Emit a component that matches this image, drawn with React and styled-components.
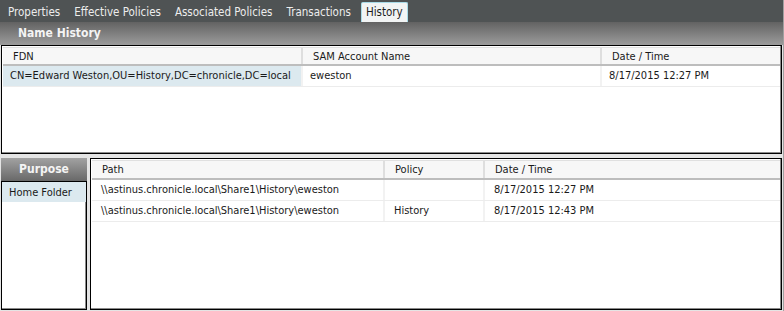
import styled, { createGlobalStyle } from "styled-components";

const tabs = [`Properties`, `Effective Policies`, `Associated Policies`, `Transactions`, `History`];

const nameCols = [
  { title: `FDN`, width: 300 },
  { title: `SAM Account Name`, width: 299 },
  { title: `Date / Time`, width: 179 },
];
const nameRows = [
  [`CN=Edward Weston,OU=History,DC=chronicle,DC=local`, `eweston`, `8/17/2015 12:27 PM`],
];

const pathCols = [
  { title: `Path`, width: 293 },
  { title: `Policy`, width: 100 },
  { title: `Date / Time`, width: 295 },
];
const pathRows = [
  [`\\\\astinus.chronicle.local\\Share1\\History\\eweston`, ``, `8/17/2015 12:27 PM`],
  [`\\\\astinus.chronicle.local\\Share1\\History\\eweston`, `History`, `8/17/2015 12:43 PM`],
];

const GlobalStyle = createGlobalStyle`
  body {
    margin: 0;
    background: #c4c4c4;
    font-family: "DejaVu Sans Condensed", "DejaVu Sans", sans-serif;
    font-size: 11px;
    color: #1a1a1a;
  }
`;

const Page = styled.div`
  width: 784px;
  height: 311px;
  display: flex;
  flex-direction: column;
  background: #e4e4e4;
  border-right: 1px solid #a0a0a0;
  box-sizing: border-box;
`;

const TabBar = styled.div`
  height: 22px;
  background: #4f5354;
  display: flex;
  align-items: flex-end;
  padding-left: 1px;
`;

const Tab = styled.div`
  height: 20px;
  padding: 0 ${(p) => (p.active ? 4 : 6)}px;
  box-sizing: border-box;
  font-size: 11.5px;
  line-height: 19px;
  color: ${(p) => (p.active ? `#1e1e1e` : `#ededed`)};
  background: ${(p) => (p.active ? `#f2f4f4` : `transparent`)};
  border: 1px solid ${(p) => (p.active ? `#a9dbe8` : `transparent`)};
  border-bottom: none;
  border-radius: 2px 2px 0 0;
  margin-left: ${(p) => (p.active ? 3 : 0)}px;
`;

const SectionHeader = styled.div`
  height: 23px;
  line-height: 22px;
  padding-left: 18px;
  background: linear-gradient(#626262, #9c9c9c);
  color: #f4f4f4;
  font-weight: bold;
  font-size: 12px;
  box-sizing: border-box;
`;

const ListBox = styled.div`
  height: ${(p) => (p.h ? `${p.h}px` : `auto`)};
  margin: ${(p) => p.m};
  border: 1px solid #000;
  background: #fff;
  padding: ${(p) => p.pad};
  box-sizing: border-box;
  box-shadow: inset -1px -1px 0 #8a8a8a;
  flex: ${(p) => (p.grow ? 1 : `none`)};
`;

const HeaderRow = styled.div`
  display: flex;
  height: ${(p) => p.h}px;
  background: #f7f7f7;
  border-top: 1px solid #e0e0e0;
  border-bottom: 2px solid #bdbdbd;
  box-sizing: border-box;
`;

const HeaderCell = styled.div`
  width: ${(p) => p.w}px;
  padding-left: 10px;
  line-height: ${(p) => p.lh}px;
  box-sizing: border-box;
  border-right: 2px solid #dedede;
  &:last-child {
    flex: 1;
    border-right: none;
  }
`;

const Row = styled.div`
  display: flex;
  height: 21px;
  border-bottom: 1px solid #ececec;
  box-sizing: border-box;
`;

const Cell = styled.div`
  width: ${(p) => p.w}px;
  padding-left: ${(p) => p.inset}px;
  line-height: 20px;
  box-sizing: border-box;
  white-space: nowrap;
  background: ${(p) => (p.selected ? `#dce9ef` : `transparent`)};
  border-right: 2px solid #f2f2f2;
  &:last-child {
    flex: 1;
    border-right: none;
  }
`;

const Bottom = styled.div`
  display: flex;
  gap: 3px;
  padding: 4px 1px 1px;
  flex: 1;
  min-height: 0;
`;

const Side = styled.div`
  width: 86px;
  display: flex;
  flex-direction: column;
`;

const SideHeader = styled.div`
  height: 23px;
  line-height: 22px;
  text-align: center;
  color: #f4f4f4;
  font-weight: bold;
  font-size: 12px;
  background: linear-gradient(#a2a2a2, #686868);
`;

const SideItem = styled.div`
  height: 20px;
  line-height: 21px;
  padding-left: 7px;
  background: ${(p) => (p.selected ? `#dce9ef` : `transparent`)};
`;

const DataGrid = ({ cols, rows, selectedCell, inset, headH }) => (
  <>
    <HeaderRow h={headH}>
      {cols.map((c) => (
        <HeaderCell key={c.title} w={c.width} lh={headH - 2}>
          {c.title}
        </HeaderCell>
      ))}
    </HeaderRow>
    {rows.map((r, i) => (
      <Row key={i}>
        {r.map((v, j) => (
          <Cell
            key={j}
            w={cols[j].width}
            inset={inset}
            selected={selectedCell && selectedCell[0] === i && selectedCell[1] === j}
          >
            {v}
          </Cell>
        ))}
      </Row>
    ))}
  </>
);

export default function App() {
  return (
    <>
      <GlobalStyle />
      <Page>
        <TabBar>
          {tabs.map((t) => (
            <Tab key={t} active={t === `History`}>
              {t}
            </Tab>
          ))}
        </TabBar>

        {/* name history */}
        <SectionHeader>Name History</SectionHeader>
        <ListBox h={109} m="0 1px" pad="1px">
          <DataGrid cols={nameCols} rows={nameRows} selectedCell={[0, 0]} inset={7} headH={19} />
        </ListBox>

        {/* purpose / paths */}
        <Bottom>
          <Side>
            <SideHeader>Purpose</SideHeader>
            <ListBox grow m="0" pad="0">
              <SideItem selected>Home Folder</SideItem>
            </ListBox>
          </Side>
          <ListBox grow m="0" pad="1px">
            <DataGrid cols={pathCols} rows={pathRows} inset={9} headH={20} />
          </ListBox>
        </Bottom>
      </Page>
    </>
  );
}
